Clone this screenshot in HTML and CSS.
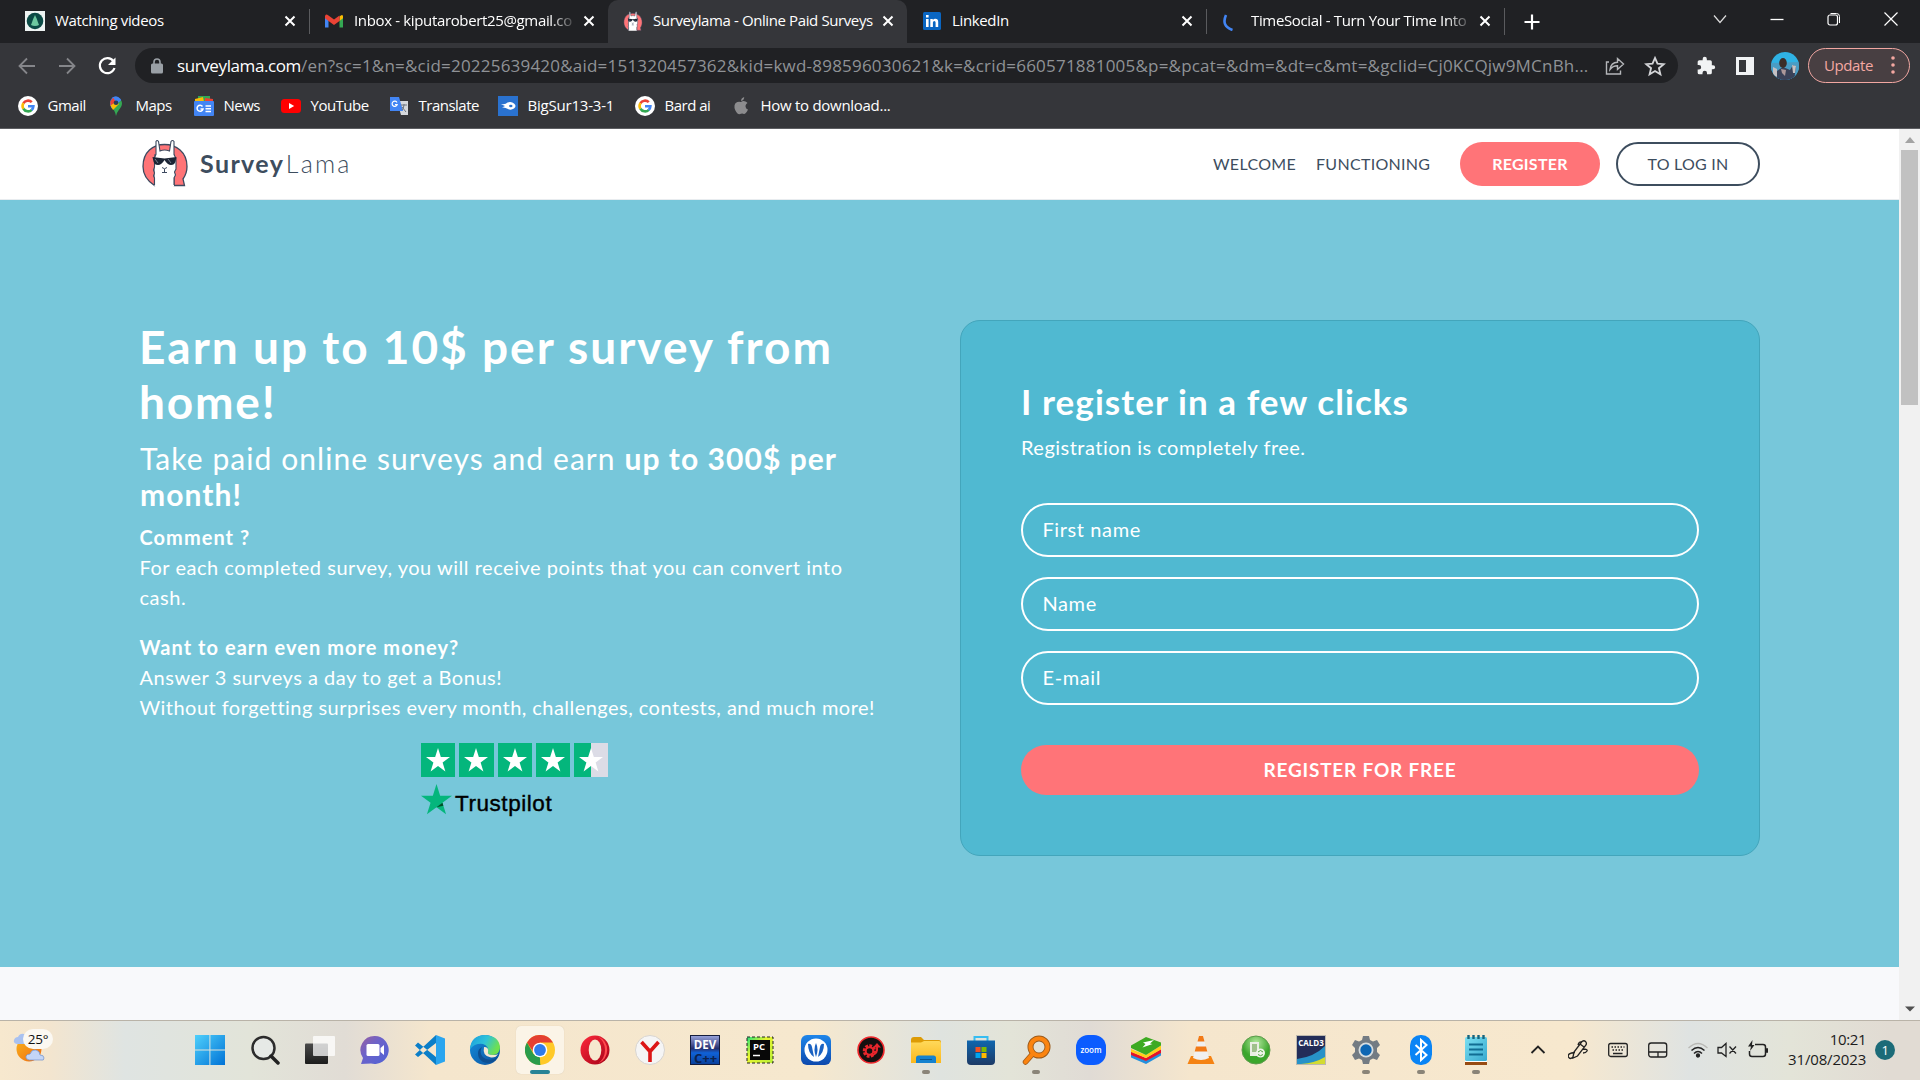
FILE: index.html
```html
<!DOCTYPE html>
<html lang="en">
<head>
<meta charset="utf-8">
<title>Surveylama - Online Paid Surveys</title>
<link rel="stylesheet" href="styles.css">
</head>
<body>
<svg width="0" height="0" class="defs">
  <defs>
    <linearGradient id="win" x2="1" y2="1"><stop stop-color="#4fd0fb"/><stop offset="1" stop-color="#0072d6"/></linearGradient>
    <linearGradient id="sun" x2="1" y2="1"><stop stop-color="#f9b41c"/><stop offset="1" stop-color="#ef6a12"/></linearGradient>
    <linearGradient id="dark" x2="0" y2="1"><stop stop-color="#4a4a4a"/><stop offset="1" stop-color="#1c1c1c"/></linearGradient>
    <linearGradient id="chat" x2="1" y2="1"><stop stop-color="#9a5f9f"/><stop offset=".4" stop-color="#6d63c9"/><stop offset="1" stop-color="#4f62d6"/></linearGradient>
    <linearGradient id="edgeTop" x2="1" y2=".4"><stop stop-color="#1a9ce0"/><stop offset=".55" stop-color="#2fc3d8"/><stop offset="1" stop-color="#6fe04f"/></linearGradient>
    <linearGradient id="edgeLow" x2="1" y2="1"><stop stop-color="#1490df"/><stop offset="1" stop-color="#0c4f9c"/></linearGradient>
    <linearGradient id="opera" x2="1" y2="1"><stop stop-color="#ff2a3c"/><stop offset="1" stop-color="#a30016"/></linearGradient>
    <linearGradient id="dev" x2="0" y2="1"><stop stop-color="#9aa5de"/><stop offset=".45" stop-color="#26306f"/><stop offset=".6" stop-color="#0f62d8"/><stop offset="1" stop-color="#0a3f9a"/></linearGradient>
    <linearGradient id="pyc" x2="1" y2="1"><stop stop-color="#21e07a"/><stop offset=".4" stop-color="#e8f431"/><stop offset="1" stop-color="#b8ee3a"/></linearGradient>
    <linearGradient id="blue" x2="0" y2="1"><stop stop-color="#1e86ea"/><stop offset="1" stop-color="#0d49ad"/></linearGradient>
    <linearGradient id="fold" x2="0" y2="1"><stop stop-color="#ffd95a"/><stop offset="1" stop-color="#fbb81c"/></linearGradient>
    <linearGradient id="store" x2="0" y2="1"><stop stop-color="#0f66ae"/><stop offset="1" stop-color="#1d3a66"/></linearGradient>
    <radialGradient id="green" cy=".25"><stop stop-color="#b6e8a0"/><stop offset="1" stop-color="#3ba62c"/></radialGradient>
    <linearGradient id="note" x2="1" y2="1"><stop stop-color="#7be0f2"/><stop offset="1" stop-color="#38a9cf"/></linearGradient>
    <symbol id="close" viewBox="0 0 12 12"><path d="M1.500 1.500l9 9M10.500 1.500l-9 9" stroke="#fff" stroke-width="2" fill="none"/></symbol>
    <symbol id="google" viewBox="0 0 20 20"><circle cx="10" cy="10" r="10" fill="#fff"/><g fill="none" stroke-width="2.600"><path d="M5.400 7.200A5.400 5.400 0 0 1 13.800 6.200" stroke="#ea4335"/><path d="M5.400 12.800A5.400 5.400 0 0 1 5.400 7.200" stroke="#fbbc05"/><path d="M13.800 13.800A5.400 5.400 0 0 1 5.400 12.800" stroke="#34a853"/><path d="M10 10.200H15.400A5.400 5.400 0 0 1 13.600 14" stroke="#4285f4"/></g></symbol>
    <symbol id="star" viewBox="0 0 24 24"><path d="M12 0l2.830 9.110H24l-7.400 5.500L19.400 23.500 12 18l-7.400 5.500 2.800-8.890L0 9.110h9.170z"/></symbol>
    <symbol id="lama" viewBox="0 0 46 48">
      <path d="M12.500 46.500C5.500 42 1 35 1 27.500 1 13 11 5.500 22.500 5.500S45 13 45 27.500c0 5-1.500 9-4 12.500l1.500 6.500H32V16H13z" fill="#ff7477" stroke="#3d4a60" stroke-width="1.300"/>
      <path d="M12.500 47.500V19l1.500-3.500V2.500Q15 .5 16.500 2.500L18 12q4.500-2 9.500 0L29 2.500Q30.500.5 32 2.500v13l2 4V30l-1.500 3 1 3-1.500 3v8.500z" fill="#fff"/>
      <path d="M12.500 46V39l-1-2 1-3-1-3 1-3v-9l1.500-3.500V2.500Q15 .5 16.500 2.500L18 12q4.500-2 9.500 0L29 2.500Q30.500.5 32 2.500v13l2 4V30l-1.500 3 1 3-1.500 3v7" fill="none" stroke="#3d4a60" stroke-width="1.100"/>
      <path d="M10.500 18l12 1.500 12-1.500-1 4.500q-1 3.500-4.500 3.500t-6.500-5q-3 5-6.500 5t-4.500-3.500z" fill="#1c2535"/>
      <path d="M13 20l3 4M26 20l3 4" stroke="#8a93a3" stroke-width=".8"/>
      <path d="M20 28.500q2.500 2.500 5 0M22.500 30v3M20 33.500h5" stroke="#3d4a60" fill="none"/>
    </symbol>
  </defs>
</svg>

<header class="tabs">
  <div class="tab"><svg class="fav" viewBox="0 0 20 20"><path d="M0 0h20v20H0z" fill="#eef3f2"/><circle cx="10" cy="10" r="8.300" fill="#0b4a45"/><path d="M10 4l1.800 4 2.200 6q-4 2-8 0l2.200-6z" fill="#6dc9a0"/></svg><span class="title">Watching videos</span><svg class="x"><use href="#close"/></svg></div>
  <div class="tab divided"><svg class="fav" viewBox="0 0 20 20"><path d="M1 5v11.500h3.500V9z" fill="#4285f4"/><path d="M19 5v11.500h-3.500V9z" fill="#34a853"/><path d="M15.500 5.500V10L19 7.300V5.200Q18.500 2.500 15.500 5.500z" fill="#fbbc04"/><path d="M1 5.200Q1.500 2 4.500 4.500L10 8.600l5.500-4.100V10L10 14 4.500 10 1 7.300z" fill="#ea4335"/></svg><span class="title fade">Inbox - kiputarobert25@gmail.co</span><svg class="x"><use href="#close"/></svg></div>
  <div class="tab active"><svg class="fav" viewBox="0 0 46 48"><use href="#lama"/></svg><span class="title">Surveylama - Online Paid Surveys</span><svg class="x"><use href="#close"/></svg></div>
  <div class="tab"><svg class="fav" viewBox="0 0 20 20"><rect x="1" y="1" width="18" height="18" rx="1.500" fill="#0a66c2"/><path d="M4 8h2.600v8H4zM4 4h2.600v2.500H4zM8.300 8h2.500v1.200Q11.500 7.800 13.400 7.800 16.200 7.800 16.200 11v5h-2.600v-4.500q0-1.500-1.300-1.500t-1.400 1.600V16H8.300z" fill="#fff"/></svg><span class="title">LinkedIn</span><svg class="x"><use href="#close"/></svg></div>
  <div class="tab divided last"><svg class="fav" viewBox="0 0 20 20"><path d="M5 4Q0 15 11.500 19" fill="none" stroke="#4285f4" stroke-width="2.600"/></svg><span class="title fade">TimeSocial - Turn Your Time Into</span><svg class="x"><use href="#close"/></svg></div>
  <svg class="plus" viewBox="0 0 16 16"><path d="M8 .5v15M.5 8h15" stroke="#fff" stroke-width="2.200"/></svg>
  <div class="window">
    <svg viewBox="0 0 16 16"><path d="M2 4.500l6 7 6-7" fill="none" stroke="#ddd" stroke-width="1.200"/></svg>
    <svg viewBox="0 0 16 16"><path d="M1.500 8.500h13" stroke="#fff" stroke-width="1.300"/></svg>
    <svg viewBox="0 0 16 16"><path d="M4.500 2.500h6q3 0 3 3v6.500" fill="none" stroke="#fff"/><rect x="2" y="4" width="9.500" height="10" rx="2" fill="none" stroke="#fff" stroke-width="1.200"/></svg>
    <svg viewBox="0 0 16 16"><path d="M1.500 1.500l13 13M14.500 1.500l-13 13" stroke="#fff" stroke-width="1.200"/></svg>
  </div>
</header>

<div class="toolbar">
  <div class="navbtns">
    <svg viewBox="0 0 20 20"><path d="M18 10H3M10 2.500L2.500 10l7.500 7.500" fill="none" stroke="#85868a" stroke-width="1.800"/></svg>
    <svg viewBox="0 0 20 20"><path d="M2 10h15M10 2.500l7.500 7.500-7.500 7.500" fill="none" stroke="#85868a" stroke-width="1.800"/></svg>
    <svg viewBox="0 0 20 20"><path d="M16.500 5.300A7.500 7.500 0 1 0 17.500 12" fill="none" stroke="#fff" stroke-width="2.200"/><path d="M18.500 1.500v7.500H11z" fill="#fff"/></svg>
  </div>
  <div class="omnibox">
    <svg class="lock" viewBox="0 0 12 16"><rect y="5.500" width="12" height="10" rx="1.500" fill="#9aa0a6"/><path d="M3 6V4q0-3 3-3t3 3v2" fill="none" stroke="#9aa0a6" stroke-width="1.600"/></svg>
    <span class="host">surveylama.com</span><span class="path">/en?sc=1&amp;n=&amp;cid=20225639420&amp;aid=151320457362&amp;kid=kwd-898596030621&amp;k=&amp;crid=660571881005&amp;p=&amp;pcat=&amp;dm=&amp;dt=c&amp;mt=&amp;gclid=Cj0KCQjw9MCnBh...</span>
    <svg class="share" viewBox="0 0 20 20"><path d="M4 6H1.500v12h14v-3.500M5 13.500Q6 6.500 12.500 6.300V2.500L18.500 8l-6 5.500V9.800Q8 9.700 5 13.500z" fill="none" stroke="#b5b7ba" stroke-width="1.400"/></svg>
    <svg class="mark" viewBox="0 0 24 24"><path d="M12 3.200l2.700 6.200 6.800.6-5.200 4.400 1.600 6.600L12 17.500 6.100 21l1.600-6.600L2.500 10l6.800-.6z" fill="none" stroke="#d3d4d7" stroke-width="2"/></svg>
  </div>
  <svg class="ext" viewBox="0 0 24 24"><path d="M20.500 11H19V7a2 2 0 0 0-2-2h-4V3.500a2.500 2.500 0 0 0-5 0V5H4a2 2 0 0 0-2 2v3.800h1.500a2.700 2.700 0 0 1 0 5.400H2V20a2 2 0 0 0 2 2h3.800v-1.500a2.700 2.700 0 0 1 5.400 0V22H17a2 2 0 0 0 2-2v-4h1.500a2.500 2.500 0 0 0 0-5z" fill="#f1f3f4"/></svg>
  <svg class="side" viewBox="0 0 18 18"><path d="M0 0h18v18H0zM3 3v12h7V3z" fill="#f1f3f4" fill-rule="evenodd"/></svg>
  <svg class="avatar" viewBox="0 0 28 28"><clipPath id="av"><circle cx="14" cy="14" r="14"/></clipPath><g clip-path="url(#av)"><path d="M0 0h28v28H0z" fill="#2fb2e4"/><path d="M0 11l28-1v18H0z" fill="#4a9cc4"/><path d="M0 23h28v5H0z" fill="#2c6f96"/><path d="M5 28l1-9 6-4 7 3 3-5 3 2-2 13z" fill="#3a4258"/><path d="M2 15l4 2v8l-4-2zM21 13l4 1-1 7h-2z" fill="#c5c0c2"/><ellipse cx="12" cy="11" rx="3.800" ry="5" fill="#3b2d28"/><path d="M10 17l5 1-1 6-3-3z" fill="#ac9899"/></g></svg>
  <div class="update"><span>Update</span><svg viewBox="0 0 4 20"><circle cx="2" cy="3" r="1.800"/><circle cx="2" cy="10" r="1.800"/><circle cx="2" cy="17" r="1.800"/></svg></div>
</div>

<nav class="bookmarks">
  <a class="b1"><svg><use href="#google"/></svg><span>Gmail</span></a>
  <a class="b2"><svg viewBox="0 0 20 20"><path d="M10 20Q9 14 5.500 11.500L14 3q3 3 1.500 7-1 2-3 4.500T10 20z" fill="#34a853"/><path d="M4.300 9.500Q3 4 7 1l3.500 5z" fill="#1a73e8"/><path d="M6.500 1.500Q11-1.500 15 4L5.500 12.500 4 8z" fill="#4285f4"/><path d="M4.200 5.500l3-4L10 6 4.500 10z" fill="#ea4335"/><path d="M4.500 9.500L10 6l3 2-6 6z" fill="#fbbc04"/><path d="M7 1.400Q12-1.500 15 4l-3 3-2-2z" fill="#4285f4"/><circle cx="10" cy="6.700" r="2.300" fill="#2c3b57"/></svg><span>Maps</span></a>
  <a class="b3"><svg viewBox="0 0 20 20"><path d="M4 0h12v6H4z" fill="#34a853"/><path d="M1 3l8-2 1 5H1z" fill="#fbbc04"/><path d="M11 2l8 1v3h-8z" fill="#ea4335"/><rect y="5" width="20" height="15" rx="1" fill="#4285f4"/><path d="M8.500 10.500A3 3 0 1 0 9 13H6.500M11.500 10H17M11.500 12.700H17M11.500 15.400H17" stroke="#fff" stroke-width="1.500" fill="none"/></svg><span>News</span></a>
  <a class="b4"><svg viewBox="0 0 20 20"><rect y="3" width="20" height="14" rx="3.500" fill="#f00"/><path d="M8 7l5.200 3L8 13z" fill="#fff"/></svg><span>YouTube</span></a>
  <a class="b5"><svg viewBox="0 0 20 20"><path d="M8 5h11v14H12z" fill="#d5d8dc"/><path d="M1 1h9l4 14H1z" fill="#4285f4"/><path d="M8 6.500A2.600 2.600 0 1 0 8.200 8.500H6" fill="none" stroke="#fff" stroke-width="1.200"/><path d="M12 9h6M15 8v1q-.5 4-2 5M13 11l4 5" fill="none" stroke="#6c7480"/></svg><span>Translate</span></a>
  <a class="b6"><svg viewBox="0 0 20 20"><path d="M0 0h20v20H0z" fill="#2a72cf"/><path d="M2.500 8q5 1 7-1.500 4-1.500 6.500 1 3 2.500 0 5-3 2-6 .5-3-2-6-1.500l3-1.500z" fill="#fff"/><ellipse cx="12.800" cy="10" rx="1.700" ry="1.200" fill="#2a72cf"/></svg><span>BigSur13-3-1</span></a>
  <a class="b7"><svg><use href="#google"/></svg><span>Bard ai</span></a>
  <a class="b8"><svg viewBox="0 0 20 20"><path d="M10 6q2-1.500 4.500-.5 1.500.5 2 1.500-3 2-1.500 5 .5 1 2 1.600Q15 18 13 18q-1.500-.8-3-.3-2 1-3.500-.2Q3 13.500 3.500 9.500 4.500 5 10 6zM10 5q0-3 3.200-4 0 3.500-3.200 4z" fill="#8c8c8e"/></svg><span>How to download...</span></a>
</nav>

<main class="viewport">
  <div class="page">
    <div class="site-head">
      <div class="brand"><svg viewBox="0 0 46 48"><use href="#lama"/></svg><b>Survey</b><span>Lama</span></div>
      <a class="link">WELCOME</a><a class="link second">FUNCTIONING</a>
      <a class="pill register">REGISTER</a><a class="pill login">TO LOG IN</a>
    </div>
    <section class="hero">
      <div class="pitch">
        <h1><span>Earn up to 10$ per survey from</span><br><span class="home">home!</span></h1>
        <h2>Take paid online surveys and earn <b>up to 300$ per<br>month!</b></h2>
        <p><b>Comment ?</b><br>For each completed survey, you will receive points that you can convert into<br>cash.</p>
        <p><b>Want to earn even more money?</b><br>Answer 3 surveys a day to get a Bonus!<br><span class="long">Without forgetting surprises every month, challenges, contests, and much more!</span></p>
        <div class="stars">
          <i><svg><use href="#star"/></svg></i><i><svg><use href="#star"/></svg></i><i><svg><use href="#star"/></svg></i><i><svg><use href="#star"/></svg></i><i class="half"><svg><use href="#star"/></svg></i>
        </div>
        <div class="trust"><svg viewBox="0 0 24 24"><use href="#star"/><path d="M16.600 14.600l.7 2.200L12 18z" fill="#005128"/></svg><span>Trustpilot</span></div>
      </div>
      <form class="card">
        <h3>I register in a few clicks</h3>
        <p>Registration is completely free.</p>
        <div class="field">First name</div>
        <div class="field">Name</div>
        <div class="field">E-mail</div>
        <div class="submit">REGISTER FOR FREE</div>
      </form>
    </section>
  </div>
  <div class="scroll"><svg viewBox="0 0 10 6"><path d="M0 6l5-6 5 6z" fill="#a3a3a3"/></svg><div class="thumb"></div><svg class="down" viewBox="0 0 12 6"><path d="M0 0l6 6 6-6z" fill="#505050"/></svg></div>
</main>

<footer class="taskbar">
  <div class="weather"><svg viewBox="0 0 40 40"><circle cx="16" cy="21" r="12.500" fill="url(#sun)"/><path d="M4 16q-4-1-3-4 1-3 4-3 2-4 6-3t5 5v5z" fill="#a9c1f0"/><path d="M16 32q-4-1-3-4 1-2 4-2 2-5 6-4t4 5q4 0 4 3t-3 2z" fill="#c3d5f7" stroke="#7390c8" stroke-width=".7"/></svg><span>25°</span></div>
  <div class="apps">
    <div><svg viewBox="0 0 30 30"><path d="M0 0h14.400v14.400H0zM15.400 0H30v14.400H15.400zM0 15.400h14.400V30H0zM15.400 15.400H30V30H15.400z" fill="url(#win)"/></svg></div>
    <div><svg viewBox="0 0 30 30"><circle cx="13.500" cy="13" r="11" fill="#e6e9e6" stroke="#2c2c2c" stroke-width="2.500"/><path d="M21 21l7 7" stroke="#222" stroke-width="3.500" stroke-linecap="round"/></svg></div>
    <div><svg viewBox="0 0 30 30"><rect y="8.500" width="23" height="20.500" rx="1" fill="url(#dark)"/><rect x="8" y="1" width="22" height="20" rx="1" fill="#fff" opacity=".75"/></svg></div>
    <div><svg viewBox="0 0 30 30"><path d="M15 1a14 14 0 1 1-4 27.500L1 29l2-6A14 14 0 0 1 15 1z" fill="url(#chat)"/><rect x="6.500" y="9" width="13" height="12" rx="1.500" fill="#fff"/><path d="M20.500 13l3.500-3v10l-3.500-3z" fill="#fff"/></svg></div>
    <div><svg viewBox="0 0 30 30"><path d="M21 0v8L3 22 0 19.500zM21 30v-8L3 7.500 0 10.500z" fill="#0b7ec8"/><path d="M21 0l9 3.500v23L21 30z" fill="#2aa5ef"/></svg></div>
    <div><svg viewBox="0 0 30 30"><circle cx="15" cy="15" r="15" fill="url(#edgeLow)"/><path d="M0 14Q1 0 15.500 0 29 1 30 12q0 7-7 8-6 0-5-3 1-6-5-8Q5 8 0 14z" fill="url(#edgeTop)"/><path d="M12 12q-4 8 4 12 7 2 12-2l-3 4q-11 5-16-3-3-8 3-11z" fill="#0d4f92"/><path d="M14 12q5 0 4 5-1 3 5 3 4 0 5-1-2 4-7 3.500-9-1-7-10.500z" fill="#f3e8d2"/></svg></div>
    <div class="current"><svg viewBox="0 0 30 30"><circle cx="15" cy="15" r="15" fill="#ffc928"/><path d="M2 7.500A15 15 0 0 1 28 7.500H15L9 18z" fill="#e43f31"/><path d="M2 7.500L8.500 19 15 22.500 15.500 30A15 15 0 0 1 2 7.500z" fill="#2a9c4b"/><path d="M15 22l6.500-3.500L15.500 30z" fill="#ffc928"/><circle cx="15" cy="15" r="7.300" fill="#fff"/><circle cx="15" cy="15" r="5.900" fill="#2f7bea"/></svg><i></i></div>
    <div><svg viewBox="0 0 30 30"><circle cx="15" cy="15" r="14.500" fill="url(#opera)"/><path d="M18 1.500A14.500 14.500 0 0 1 18 28.500q7-5 7-13.500T18 1.500z" fill="#ff4a4f"/><ellipse cx="15" cy="15" rx="6.300" ry="10.500" fill="#f6e8cf"/></svg></div>
    <div><svg viewBox="0 0 30 30"><circle cx="15" cy="15" r="14.500" fill="#f5f5f5" stroke="#d8d4cf"/><path d="M6.500 7l8.500 9.500L23.500 7M15 15v12" fill="none" stroke="#dc1616" stroke-width="3.600"/></svg></div>
    <div><svg viewBox="0 0 30 30"><rect x=".5" y=".5" width="29" height="29" fill="url(#dev)" stroke="#141c3c"/><text x="15" y="13.500" class="glyph dev">DEV</text><text x="15.500" y="27.500" class="glyph cpp">C++</text></svg></div>
    <div><svg viewBox="0 0 30 30"><rect x="2" y="2" width="26" height="26" fill="url(#pyc)" stroke="#222" stroke-dasharray="3 2"/><path d="M5 5h20v20H5z" fill="#080808"/><text x="14" y="15" class="glyph pc">PC</text><path d="M8 20.500h7" stroke="#fff" stroke-width="1.500"/></svg></div>
    <div><svg viewBox="0 0 30 30"><rect width="30" height="30" rx="6" fill="url(#blue)"/><circle cx="15" cy="15" r="11.500" fill="#fff"/><path d="M7 9q3-1 4 3l2 10Q7 18 7 9zM23 9q-3-1-4 3l-2 10q6-4 6-13zM15 8q3 6 0 14-3-8 0-14z" fill="#1a62c2"/></svg></div>
    <div><svg viewBox="0 0 30 30"><circle cx="15" cy="15" r="13" fill="#141010" stroke="#f02a2e" stroke-width="1.600"/><circle cx="13.500" cy="16" r="5" fill="none" stroke="#e7262c" stroke-width="3.500" stroke-dasharray="2.600 1.200"/><circle cx="13.500" cy="16" r="3.800" fill="none" stroke="#e7262c" stroke-width="2"/><path d="M16 20q6-1 5-8" fill="none" stroke="#e7262c" stroke-width="2"/><path d="M17 12.500l4-4.500 4 4.500z" fill="#e7262c"/></svg></div>
    <div class="open"><svg viewBox="0 0 30 30"><path d="M0 5q0-3 3-3h7l3 3h15q2 0 2 2v5H0z" fill="#dd9b05"/><path d="M0 7.500h10L13 6h15q2 0 2 2v20H0z" fill="url(#fold)"/><path d="M5 28v-5q0-2.500 2.500-2.500h15q2.500 0 2.500 2.500v5z" fill="#1582cf"/><path d="M9 24.500h12" stroke="#0b568f"/></svg><i></i></div>
    <div><svg viewBox="0 0 30 30"><path d="M8.500 6V2h13v4" fill="none" stroke="#37bdf1" stroke-width="2"/><path d="M1 5.500h28V26q0 4-4 4H5q-4 0-4-4z" fill="url(#store)"/><path d="M9.500 12h5v5h-5z" fill="#f25022"/><path d="M15.500 12h5v5h-5z" fill="#7fba00"/><path d="M9.500 18h5v5h-5z" fill="#00a4ef"/><path d="M15.500 18h5v5h-5z" fill="#ffb900"/></svg></div>
    <div class="open"><svg viewBox="0 0 30 30"><circle cx="18" cy="12" r="8.500" fill="none" stroke="#9a5a1c" stroke-width="6"/><path d="M11.500 19l-7 8" stroke="#a35c18" stroke-width="5.500" stroke-linecap="round"/><circle cx="18" cy="12" r="8.500" fill="none" stroke="#fb8410" stroke-width="4.200"/><path d="M11.500 19l-7 8" stroke="#fb8410" stroke-width="4" stroke-linecap="round"/></svg><i></i></div>
    <div><svg viewBox="0 0 30 30"><rect width="30" height="30" rx="12" fill="#0b5cff"/><text x="15" y="17.500" class="glyph zoom">zoom</text></svg></div>
    <div><svg viewBox="0 0 30 30"><path d="M0 19l15 6.500L30 17v3.500L15 29 0 22.500z" fill="#2490dd"/><path d="M0 16.500l15 6.500 15-9v4L15 26 0 20z" fill="#e3122b"/><path d="M0 14l15 6 15-9.500v4L15 23 0 17z" fill="#ffce1b"/><path d="M0 10.500L15 2l15 5.500v3L15 20 0 13z" fill="#3daa22"/><path d="M12 7.500l11-2.500-4 3.500 2.500.5-10 3.500 3-3.500z" fill="#fff"/></svg></div>
    <div><svg viewBox="0 0 30 30"><path d="M5 21h20l3.500 8h-27z" fill="#f58313"/><path d="M13 1h4l6 22q-8 4-16 0z" fill="#f0f0f0"/><path d="M13 1h4l1.500 5.500h-7zM10 11.500h10l1.300 5H8.700z" fill="#f27a16"/></svg></div>
    <div><svg viewBox="0 0 30 30"><circle cx="15" cy="15" r="14" fill="url(#green)" stroke="#5c9b4c"/><rect x="9" y="7" width="9" height="14" fill="#e9eee4"/><path d="M11 9h5v8h-5z" fill="#9fc08c"/><circle cx="19.500" cy="18" r="4.500" fill="#eef4e9"/><path d="M17 17q2.500-3 5 0M17 19.500q2.500 2.500 5 0" fill="none" stroke="#54a543"/></svg></div>
    <div><svg viewBox="0 0 30 30"><path d="M1 1h28v28H1z" fill="#232d58"/><path d="M1 24Q18 22 29 11v18H1z" fill="#2792c8"/><path d="M5 29q14-1 24-7v7z" fill="#d3db32"/><text x="15" y="11" class="glyph cald">CALD3</text><rect x=".5" y=".5" width="29" height="29" fill="none" stroke="#bdb9ae"/></svg></div>
    <div class="open"><svg viewBox="0 0 30 30"><path d="M12 1h6l1 4 3 1.500L26 5l3 5-3 3v4l3 3-3 5-4-1.500-3 1.500-1 4h-6l-1-4-3-1.500L4 25l-3-5 3-3v-4l-3-3 3-5 4 1.500L11 5z" fill="#737b83"/><circle cx="15" cy="15" r="7.500" fill="#d7dde0"/><circle cx="15" cy="15" r="5.700" fill="#0d66b4"/></svg><i></i></div>
    <div class="open"><svg viewBox="0 0 30 30"><rect x="4" width="22" height="30" rx="10.500" fill="#0a84f5"/><path d="M9.500 10l11 10-5.500 5V5l5.500 5-11 10" fill="none" stroke="#fff" stroke-width="2"/></svg><i></i></div>
    <div class="open"><svg viewBox="0 0 30 30"><path d="M4 25h22v5H4z" fill="#974b12"/><path d="M4 24h22v3H4z" fill="#fff"/><rect x="4" y="2" width="22" height="24" rx="1.500" fill="url(#note)"/><path d="M8 9.500h14M8 14.500h14M8 19.500h14" stroke="#116d93" stroke-width="1.800"/><path d="M7.500 0v4M12.500 0v4M17.500 0v4M22.500 0v4" stroke="#17657f" stroke-width="2.400"/></svg><i></i></div>
  </div>
  <div class="tray">
    <svg viewBox="0 0 20 20"><path d="M3.500 13L10 6.500l6.500 6.500" fill="none" stroke-width="1.800"/></svg>
    <svg viewBox="0 0 20 20"><path d="M5 17L6 12 14 1.500q2-1.500 3.500 0t.5 3.500L9.500 16 5 18zM12 4l4 3M7 12.500Q-1 13 .500 17 2 20 5 17M15 9q5 0 4 2t-4 2M14 2q-3-1-4 3"/></svg>
    <svg viewBox="0 0 20 20"><rect x=".7" y="3.500" width="18.600" height="13" rx="2"/><path d="M3.500 7h13M4.500 10h11" stroke-dasharray="1.500 1.500" stroke-width="1.500"/><path d="M5 13.500h9.500" stroke-width="1.500"/></svg>
    <svg viewBox="0 0 20 20"><rect x=".7" y="3" width="18" height="14" rx="2.500"/><path d="M1 12h18M10 12v5"/></svg>
    <svg viewBox="0 0 20 20" class="wifi"><path d="M.5 8Q10-1 19.500 8" stroke="#b9b9b5"/><path d="M3.500 10.500q6.500-6 13 0M6 13.500q4-4 8 0" stroke-width="1.500"/><circle cx="10" cy="15.500" r="1.500" fill="#222"/></svg>
    <svg viewBox="0 0 20 20" class="vol"><path d="M1 7.500h3.500L9 3.500v13L4.500 13H1zM12.500 6.500l6.500 7M19 6.500l-6.500 7"/></svg>
    <svg viewBox="0 0 20 20" class="bat"><path d="M7 4.500h8q2.500 0 2.500 2.500v7q0 2.500-2.500 2.500H4Q1.500 16.500 1.500 14v-3M18.500 9v3h1V9z" stroke-width="1.500"/><path d="M4.500 0L0 6.500h3L2 11l4.500-6H4z" fill="#222" stroke="none"/></svg>
  </div>
  <div class="clock"><span>10:21</span><span class="date">31/08/2023</span></div>
  <div class="badge">1</div>
</footer>
</body>
</html>
```
FILE: styles.css
```css
* { box-sizing: border-box; }
body {
  margin: 0; width: 1920px; height: 1080px; overflow: hidden;
  display: flex; flex-direction: column;
  font-family: "Open Sans", "Noto Sans", sans-serif; background: #35363a;
}
.defs { position: absolute; }
svg { flex: none; display: block; }
h1, h2, h3, p { margin: 0; }

/* tab strip */
.tabs { height: 43px; flex: none; background: #202124; display: flex; align-items: center; padding-left: 10px; }
.tab {
  width: 299px; height: 43px; flex: none; display: flex; align-items: center;
  padding: 0 13px 2px 15px; color: #fff; font-size: 15px; letter-spacing: -.35px;
  white-space: nowrap;
}
.tab .fav { width: 20px; height: 20px; margin-right: 10px; }
.tab .title { flex: 1; line-height: 24px; padding-bottom: 2px; }
.tab .x { width: 12px; height: 12px; margin-left: 6px; }
.fade { -webkit-mask-image: linear-gradient(90deg, #000 88%, transparent); mask-image: linear-gradient(90deg, #000 88%, transparent); }
.divided { background: linear-gradient(#5a5b5e, #5a5b5e) 0 9px / 1px 25px no-repeat; }
.last { border-right: 1px solid; border-image: linear-gradient(transparent 21%, #5a5b5e 21% 79%, transparent 79%) 1; }
.active { background: #35363a; border-radius: 10px 10px 0 0; letter-spacing: -.39px; }
.plus { width: 16px; height: 16px; margin-left: 19px; }
.window { margin-left: auto; margin-right: 21px; margin-bottom: 6px; display: flex; gap: 41px; }
.window svg { width: 16px; height: 16px; }

/* address bar */
.toolbar { height: 45px; flex: none; display: flex; align-items: center; padding: 0 10px 0 17px; }
.navbtns { display: flex; gap: 20px; width: 118px; }
.navbtns svg { width: 20px; height: 20px; }
.omnibox { width: 1543px; height: 35px; border-radius: 18px; background: #202124; display: flex; align-items: center; padding: 0 12px 0 16px; font-size: 17px; white-space: nowrap; }
.omnibox span { padding-bottom: 1px; }
.lock { width: 12px; height: 16px; margin-right: 14px; }
.host { color: #fff; letter-spacing: -.4px; }
.path { color: #8f9296; letter-spacing: .21px; }
.share { width: 20px; height: 20px; margin-left: auto; margin-right: 19px; }
.mark { width: 22px; height: 22px; }
.ext { width: 20px; height: 20px; margin-left: 18px; }
.side { width: 18px; height: 18px; margin-left: 20px; }
.avatar { width: 28px; height: 28px; margin-left: 17px; }
.update {
  width: 102px; height: 35px; margin-left: auto; border: 1.5px solid #f2a7a2; border-radius: 18px; background: #483f42;
  color: #f4a8a2; display: flex; align-items: center; justify-content: space-between; padding: 0 14px 1px 15px;
  font-size: 15px; letter-spacing: -.4px;
}
.update svg { width: 4px; height: 20px; fill: #f4a8a2; }

/* bookmarks */
.bookmarks { height: 41px; flex: none; display: flex; align-items: center; padding: 0 0 5px 18px; color: #fff; font-size: 15px; letter-spacing: -.5px; border-bottom: 1px solid #5d5e62; }
.bookmarks a { display: flex; align-items: center; white-space: nowrap; }
.bookmarks span { padding-bottom: 2px; }
.bookmarks svg { width: 20px; height: 20px; margin-right: 9.500px; }
.b1, .b2 { width: 88px; }
.b3 { width: 87px; }
.b4 { width: 108px; }
.b5 { width: 109px; }
.b6 { width: 137px; letter-spacing: -.2px; }
.b7 { width: 96px; }
.b8 { letter-spacing: -.28px; }

/* viewport */
.viewport { height: 891px; flex: none; display: flex; }
.page { width: 1899px; background: #f8f9fb; font-family: Lato, "Open Sans", sans-serif; }
.site-head { height: 71px; background: #fff; border-bottom: 1px solid #e8ecef; display: flex; align-items: center; padding: 0 139px 0 142px; color: #3d4d5e; font-size: 16px; }
.brand { display: flex; align-items: center; font-size: 25px; margin-right: auto; padding-bottom: 2px; }
.brand svg { width: 46px; height: 48px; margin-right: 12px; }
.brand b { letter-spacing: 1.4px; }
.brand span { letter-spacing: 2.200px; font-weight: 300; padding-left: 1.500px; }
.link { letter-spacing: .3px; width: 103px; padding-bottom: 2px; }
.second { width: 144px; }
.pill { height: 44px; border-radius: 22px; display: flex; align-items: center; justify-content: center; letter-spacing: .25px; padding-bottom: 2px; }
.register { width: 140px; background: #ff7478; color: #fff; font-weight: 700; }
.login { width: 144px; margin-left: 16px; border: 2px solid #3d4d5e; }

.hero { height: 767px; background: #77c7da; display: flex; align-items: flex-start; padding: 120px 139px 0 140px; color: #fff; }
.pitch { width: 820px; margin-top: -1px; white-space: nowrap; }
.pitch h1 { font-size: 46px; line-height: 55px; letter-spacing: 2px; margin: 0 0 11px -1px; }
.home { letter-spacing: 1.8px; }
.pitch h2 { font-size: 30px; line-height: 36px; font-weight: 400; letter-spacing: 1.07px; margin-bottom: 10px; }
.pitch h2 b { letter-spacing: 1.05px; }
.pitch p { font-size: 20px; line-height: 30px; letter-spacing: .53px; margin: 0 0 20px -.5px; }
.pitch p b { letter-spacing: 1.04px; }
.pitch p .long { letter-spacing: .46px; }
.stars { display: flex; gap: 4px; padding-left: 281px; margin-top: 21px; }
.stars i { width: 34.300px; height: 34px; background: #04b67c; display: flex; align-items: center; justify-content: center; }
.stars .half { background: linear-gradient(90deg, #04b67c 50%, #dcdce6 50%); }
.stars svg { width: 24px; height: 24px; fill: #fff; }
.trust { display: flex; align-items: flex-start; padding: 7px 0 0 281px; color: #000; font: 22.500px/34px "Liberation Sans", sans-serif; letter-spacing: .55px; -webkit-text-stroke: .4px #000; }
.trust svg { width: 31px; height: 31px; fill: #04b67c; margin-right: 3px; }
.trust span { padding-top: 3px; }

.card { width: 800px; height: 536px; background: #50b9d1; border: 1px solid #43a5bb; border-radius: 20px; padding: 59px 60px 0; }
.card h3 { font-size: 35px; line-height: 42px; letter-spacing: 1.06px; }
.card p { font-size: 20px; line-height: 30px; letter-spacing: .48px; margin: 10px 0 41px; }
.field { height: 54px; border: 2px solid #fff; border-radius: 27px; margin-bottom: 20px; padding-left: 19.500px; font-size: 20px; line-height: 49px; letter-spacing: .6px; }
.submit { height: 50px; margin-top: 40px; border-radius: 25px; background: #ff7478; text-align: center; font-size: 19px; font-weight: 700; line-height: 50px; letter-spacing: .8px; }

.scroll { width: 21px; background: #f1f1f1; display: flex; flex-direction: column; align-items: center; padding: 8px 0; }
.scroll svg { width: 10px; height: 6px; }
.thumb { width: 17px; height: 255px; margin-top: 7px; background: #c1c1c1; }
.scroll .down { width: 10px; height: 6px; margin-top: auto; }

/* taskbar */
.taskbar {
  height: 60px; flex: none; border-top: 1px solid #b9b3a8; display: flex; align-items: center; padding-bottom: 1px;
  background: linear-gradient(90deg, #f7e8ce 0, #f3e5cf 50px, #dfe4e2 125px, #e2e4d9 250px, #e1dcd5 345px, #f5e6cd 430px, #f6e8ce 810px, #dfe3df 940px, #e3e4d8 1010px, #e0dbd5 1090px, #f5e6cd 1190px, #f7e8ce 1570px, #dfe3e2 1690px, #e3e4d8 1790px, #e1dbd3 1890px);
}
.weather { width: 182.500px; flex: none; display: flex; align-items: flex-start; padding-left: 13px; }
.weather svg { width: 40px; height: 40px; margin: -5px -30px 0 0; }
.weather span { position: relative; margin-top: -4px; width: 30px; height: 20px; border-radius: 10px; background: #fbf8f2; color: #111; font-size: 13.500px; line-height: 20px; text-align: center; letter-spacing: -.2px; }
.apps { display: flex; }
.apps > div { width: 55.050px; height: 48px; display: flex; flex-direction: column; align-items: center; padding-top: 9px; }
.apps svg { width: 30px; height: 30px; }
.apps i { width: 8px; height: 4px; border-radius: 2px; background: #8a8478; margin-top: 5px; }
.apps .current { width: 48px; margin: 0 3.520px; background: #fbf4e7; border-radius: 5px; box-shadow: 0 0 1px #cfc3ad; }
.apps .current i { width: 20px; background: #278396; }
.glyph { fill: #fff; text-anchor: middle; font-family: "Open Sans", sans-serif; font-weight: 700; }
.dev { font-size: 11.500px; }
.cpp { font-size: 13px; fill: #0b2250; }
.pc { font-size: 9.500px; }
.zoom { font-size: 8px; font-weight: 600; }
.cald { font-size: 8px; }
.tray { display: flex; align-items: center; margin-left: 24.500px; gap: 20px; width: 265px; flex: none; }
.tray svg { width: 20px; height: 20px; fill: none; stroke: #222; stroke-width: 1.300; }
.tray .vol { margin-left: -11px; }
.tray .bat { margin-left: -9px; }
.clock { width: 73px; flex: none; display: flex; flex-direction: column; align-items: flex-end; color: #1c1c1c; font-size: 15px; line-height: 20px; letter-spacing: -.4px; padding-bottom: 2px; }
.date { letter-spacing: -.16px; }
.badge { width: 20px; height: 20px; border-radius: 50%; background: #1c6b78; color: #fff; font-size: 13px; line-height: 20px; text-align: center; margin-left: 9px; flex: none; }
```
